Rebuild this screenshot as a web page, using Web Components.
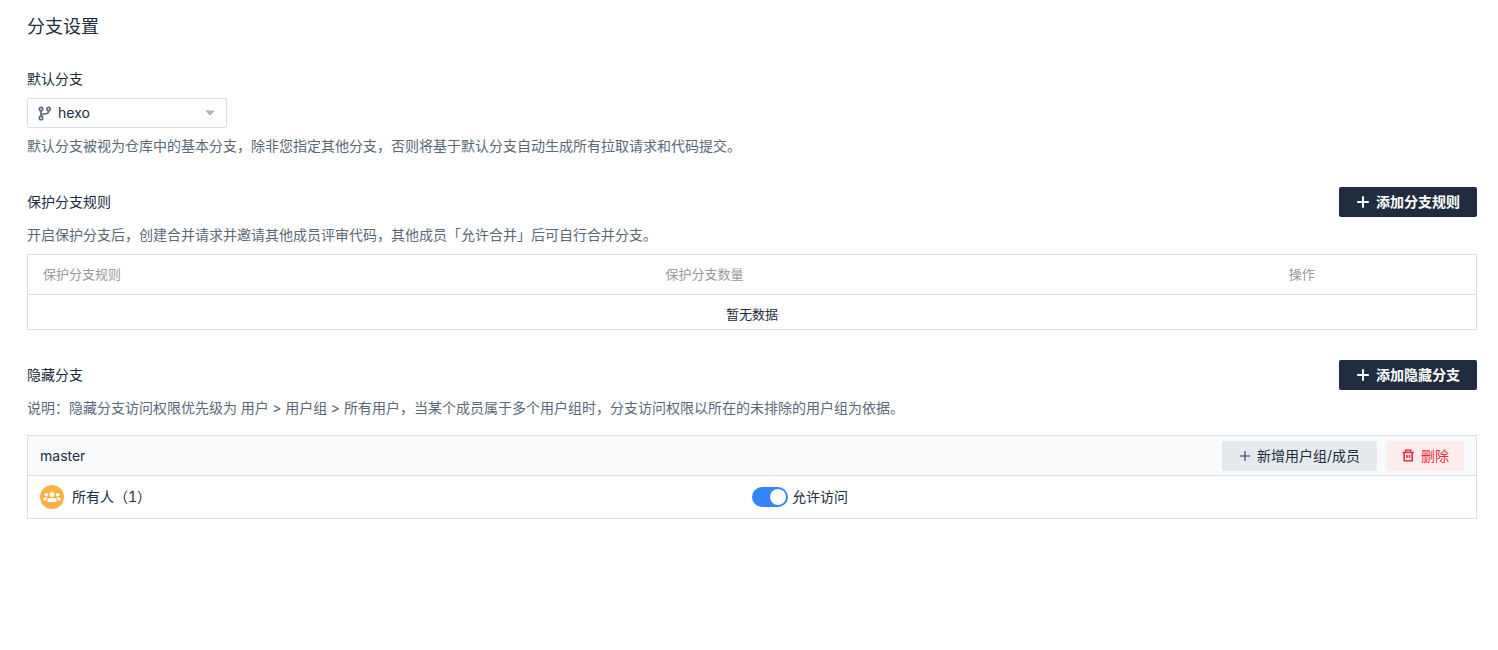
<!DOCTYPE html>
<html lang="zh-CN">
<head>
<meta charset="utf-8">
<title>分支设置</title>
<style>
body { margin: 0; background: #fff; color: #202d40; font: 14px/20px Inter, "Noto Sans CJK SC", sans-serif; font-variant-numeric: tabular-nums; }
</style>
</head>
<body>
<branch-settings></branch-settings>
<script>
const define = (name, html, setup) => {
  const template = document.createElement('template');
  template.innerHTML = html;
  customElements.define(name, class extends HTMLElement {
    constructor() {
      super();
      this.attachShadow({ mode: 'open' }).append(template.content.cloneNode(true));
    }
    connectedCallback() { if (setup) setup(this, this.shadowRoot); }
  });
};

const icons = {
  plus: '<svg viewBox="0 0 14 14" aria-hidden="true"><path d="M7 1.2v11.6M1.2 7h11.6" fill="none" stroke="currentColor" stroke-width="1.9"/></svg>',
  trash: '<svg viewBox="0 0 13 13" aria-hidden="true"><path d="M.5 3.5h11.5M3.7 3.2V1.3h5v1.9M2.2 3.7v8h8v-8M4.9 6v3M7.5 6v3" fill="none" stroke="currentColor" stroke-width="1.6"/></svg>'
};

define('action-button', `
  <style>
    :host { display: block; flex: none; --bg: #202d40; --fg: #fff; --icon-color: #fff; --pad: 17px; --icon: 14px; --weight: 700; }
    :host([kind="secondary"]) { --bg: #e6eaef; --fg: #202d40; --icon-color: #606c80; --icon: 12px; --weight: 400; }
    :host([kind="danger"]) { --bg: #fdecec; --fg: #e92e43; --icon-color: #e92e43; --pad: 15px; --icon: 13px; --weight: 400; }
    button { display: flex; align-items: center; gap: 6px; height: 30px; padding: 0 var(--pad); border: 0; border-radius: 2px; background: var(--bg); color: var(--fg); font: inherit; font-weight: var(--weight); cursor: pointer; white-space: nowrap; }
    .icon { display: flex; color: var(--icon-color); }
    svg { width: var(--icon); height: var(--icon); }
  </style>
  <button type="button"><span class="icon"></span><slot></slot></button>`,
  (host, root) => { root.querySelector('.icon').innerHTML = icons[host.getAttribute('icon')]; });

define('branch-select', `
  <style>
    :host { display: block; }
    label { display: block; margin-bottom: 9px; }
    .field { display: grid; width: 200px; align-items: center; }
    .field > * { grid-area: 1 / 1; }
    select { appearance: none; width: 100%; height: 30px; box-sizing: border-box; margin: 0; padding: 0 30px; border: 1px solid #dadfe6; border-radius: 2px; background: #fff; color: inherit; font: inherit; }
    svg { pointer-events: none; }
    .branch { margin-left: 11px; width: 14px; height: 16px; }
    .arrow { justify-self: end; margin-right: 12px; width: 10px; height: 6px; }
  </style>
  <label for="branch">默认分支</label>
  <div class="field">
    <select id="branch"><option>hexo</option><option>master</option></select>
    <svg class="branch" viewBox="0 0 14 16" aria-hidden="true" fill="none" stroke="#606c80" stroke-width="1.7"><circle cx="3" cy="4" r="1.7"/><circle cx="10.6" cy="4" r="1.7"/><circle cx="3" cy="12.9" r="1.7"/><path d="M3 5.7v5.5M10.6 5.7v.8Q10.6 8.2 8.8 8.5L5 9.1Q3 9.5 3 11.2"/></svg>
    <svg class="arrow" viewBox="0 0 10 6" aria-hidden="true"><path d="M1 1h8L5 5z" fill="#adb5c2" stroke="#adb5c2" stroke-linejoin="round"/></svg>
  </div>`);

define('settings-section', `
  <style>
    :host { display: block; margin-top: 30px; }
    header { display: flex; align-items: center; justify-content: space-between; }
    h2 { margin: 0; font-size: 14px; font-weight: 400; }
    p { margin: 8px 0 0; color: #5b6877; }
    .body { margin-top: var(--body-gap, 9px); }
  </style>
  <header><h2></h2><slot name="action"></slot></header>
  <p><slot name="note"></slot></p>
  <div class="body"><slot></slot></div>`,
  (host, root) => { root.querySelector('h2').textContent = host.getAttribute('heading'); });

define('rule-table', `
  <style>
    :host { display: block; font-size: 13px; }
    table { width: 100%; table-layout: fixed; border-collapse: collapse; border: 1px solid #dadfe6; }
    th { height: 37px; padding: 0 15px 2px; text-align: left; font-weight: 400; color: #999; border-bottom: 1px solid #dadfe6; }
    th:nth-child(-n+2) { width: 43%; box-sizing: border-box; }
    td { padding: 9px 0 5px; text-align: center; }
  </style>
  <table>
    <thead><tr><th scope="col">保护分支规则</th><th scope="col">保护分支数量</th><th scope="col">操作</th></tr></thead>
    <tbody><tr><td colspan="3">暂无数据</td></tr></tbody>
  </table>`);

define('toggle-switch', `
  <style>
    :host { display: block; }
    label { display: flex; align-items: center; gap: 4px; }
    input { appearance: none; display: flex; box-sizing: border-box; width: 36px; height: 20px; margin: 0; padding: 2px; border-radius: 10px; background: #c3cad5; cursor: pointer; }
    input::before { content: ""; width: 16px; height: 16px; border-radius: 50%; background: #fff; }
    input:checked { background: #3385ff; justify-content: flex-end; }
  </style>
  <label><input type="checkbox" role="switch" checked><slot></slot></label>`);

define('hidden-branch', `
  <style>
    :host { display: block; border: 1px solid #dadfe6; }
    header { display: flex; align-items: center; gap: 10px; height: 39px; padding: 0 12px; background: #f9fafc; border-bottom: 1px solid #dadfe6; }
    h3 { flex: 1; margin: 0; font-size: 14px; font-weight: 400; }
    .row { display: grid; grid-template-columns: 1fr 1fr; align-items: center; height: 42px; }
    .group { display: flex; align-items: center; gap: 8px; padding-left: 12px; }
    svg { width: 24px; height: 24px; }
  </style>
  <header>
    <h3><slot></slot></h3>
    <action-button kind="secondary" icon="plus">新增用户组/成员</action-button>
    <action-button kind="danger" icon="trash">删除</action-button>
  </header>
  <div class="row">
    <div class="group">
      <svg viewBox="0 0 24 24" aria-hidden="true"><circle cx="12" cy="12" r="12" fill="#fcb045"/><g fill="#fff"><circle cx="12" cy="9.5" r="2.5"/><path d="M7.5 17v-1.2q0-2.9 2.9-2.9h3.2q2.9 0 2.9 2.9V17z"/><circle cx="6.3" cy="9.8" r="1.8"/><circle cx="17.7" cy="9.8" r="1.8"/><path d="M3.3 15.4v-.8q0-2.2 2.1-2.2h2.4q-1.4 1.3-1.4 3zM20.7 15.4v-.8q0-2.2-2.1-2.2h-2.4q1.4 1.3 1.4 3z"/></g></svg>
      <span>所有人（1）</span>
    </div>
    <toggle-switch>允许访问</toggle-switch>
  </div>`);

define('branch-settings', `
  <style>
    :host { display: block; }
    main { padding: 15px 21px 30px 27px; }
    h1 { margin: 0 0 30px; font-size: 18px; line-height: 24px; font-weight: 400; }
    .hint { margin: 7px 0 0; line-height: 22px; color: #5b6877; }
    .hidden { --body-gap: 17px; }
  </style>
  <main>
    <h1>分支设置</h1>
    <branch-select></branch-select>
    <p class="hint">默认分支被视为仓库中的基本分支，除非您指定其他分支，否则将基于默认分支自动生成所有拉取请求和代码提交。</p>
    <settings-section heading="保护分支规则">
      <action-button slot="action" icon="plus">添加分支规则</action-button>
      <span slot="note">开启保护分支后，创建合并请求并邀请其他成员评审代码，其他成员「允许合并」后可自行合并分支。</span>
      <rule-table></rule-table>
    </settings-section>
    <settings-section class="hidden" heading="隐藏分支">
      <action-button slot="action" icon="plus">添加隐藏分支</action-button>
      <span slot="note">说明：隐藏分支访问权限优先级为 用户 &gt; 用户组 &gt; 所有用户，当某个成员属于多个用户组时，分支访问权限以所在的未排除的用户组为依据。</span>
      <hidden-branch>master</hidden-branch>
    </settings-section>
  </main>`);
</script>
</body>
</html>
